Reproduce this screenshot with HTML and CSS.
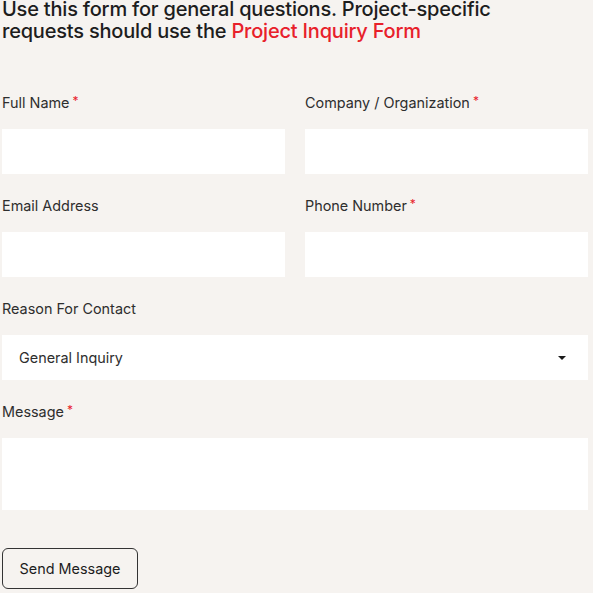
FILE: index.html
```html
<!DOCTYPE html>
<html lang="en">
<head>
<meta charset="utf-8">
<title>Contact Form</title>
<link rel="stylesheet" href="styles.css">
</head>
<body>
<div class="page">
  <h1 class="intro">Use this form for general questions. Project-specific requests should use the <a class="link" href="#">Project Inquiry Form</a></h1>
  <form class="form">
    <div class="row">
      <div class="field">
        <label class="label">Full Name<span class="req">*</span></label>
        <div class="input"></div>
      </div>
      <div class="field">
        <label class="label">Company / Organization<span class="req">*</span></label>
        <div class="input"></div>
      </div>
    </div>
    <div class="row">
      <div class="field">
        <label class="label">Email Address</label>
        <div class="input"></div>
      </div>
      <div class="field">
        <label class="label">Phone Number<span class="req">*</span></label>
        <div class="input"></div>
      </div>
    </div>
    <div class="field">
      <label class="label">Reason For Contact</label>
      <div class="input select"><span>General Inquiry</span><span class="caret"></span></div>
    </div>
    <div class="field">
      <label class="label">Message<span class="req">*</span></label>
      <div class="input textarea"></div>
    </div>
    <div class="actions">
      <button type="button" class="btn">Send Message</button>
    </div>
  </form>
</div>
</body>
</html>
```
FILE: styles.css
```css
html, body {
  margin: 0;
  padding: 0;
  background: #f6f3f0;
}
body {
  font-family: Inter, "Liberation Sans", sans-serif;
  color: #222222;
}
.page {
  padding: 0 5px 0 2px;
}
.intro {
  margin: -2px 0 0;
  font-size: 20px;
  line-height: 22px;
  font-weight: 500;
  letter-spacing: -0.2px;
  color: #1d1d1d;
  width: 500px;
}
.link {
  color: #e8202a;
  text-decoration: none;
}
.form {
  display: flex;
  flex-direction: column;
  gap: 23px;
  margin-top: 52px;
}
.row {
  display: grid;
  grid-template-columns: 1fr 1fr;
  gap: 20px;
}
.field {
  display: flex;
  flex-direction: column;
  gap: 17px;
}
.label {
  display: block;
  height: 18px;
  font-size: 14.4px;
  line-height: 18px;
  color: #2e2e2e;
}
.req {
  color: #e8202a;
  margin-left: 3px;
  font-size: 12px;
  line-height: 0;
  vertical-align: 3px;
}
.input {
  height: 45px;
  background: #ffffff;
}
.select {
  display: flex;
  align-items: center;
  justify-content: space-between;
  padding: 0 22px 0 17px;
  font-size: 14.4px;
  color: #2e2e2e;
}
.caret {
  width: 0;
  height: 0;
  border-left: 4px solid transparent;
  border-right: 4px solid transparent;
  border-top: 4px solid #1a1a1a;
}
.textarea {
  height: 72px;
}
.actions {
  margin-top: 15px;
}
.btn {
  font-family: Inter, "Liberation Sans", sans-serif;
  font-size: 14.4px;
  color: #1d1d1d;
  background: transparent;
  border: 1px solid #333333;
  border-radius: 6px;
  width: 136px;
  height: 41px;
  padding: 0;
  cursor: pointer;
}
```
